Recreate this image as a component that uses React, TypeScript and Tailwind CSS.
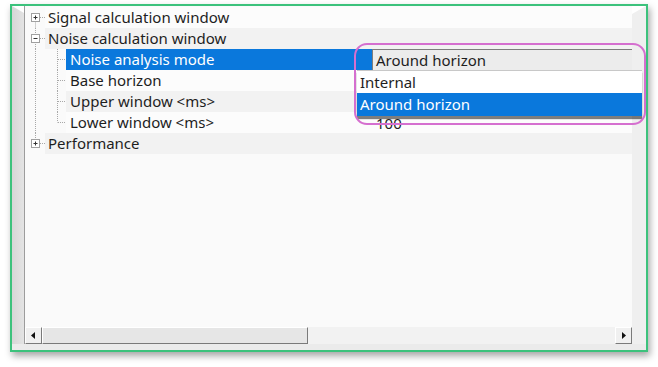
import React from "react";

const FONT = { fontFamily: '"Noto Sans", "Open Sans", Arial, sans-serif' };

type RowDef = {
  label: string;
  level: 0 | 1;
  expander?: "plus" | "minus";
  bg: "white" | "gray" | "sel";
  rootLine: "bottom" | "full" | "top";
  childLine?: "full" | "top";
  value?: React.ReactNode;
};

const DOT = "#a8a8a8";

function Lines({ row }: { row: RowDef }) {
  const w = row.level === 0 ? 20 : 41;
  const v0 =
    row.rootLine === "bottom" ? [10.5, 21] : row.rootLine === "top" ? [0, 10.5] : [0, 21];
  return (
    <svg width={w} height={21} className="shrink-0 block">
      <line x1={10.5} y1={v0[0]} x2={10.5} y2={v0[1]} stroke={DOT} strokeWidth={1} strokeDasharray="1 1" />
      {row.level === 0 && (
        <line x1={15} y1={10.5} x2={20} y2={10.5} stroke={DOT} strokeWidth={1} strokeDasharray="1 1" />
      )}
      {row.level === 1 && row.childLine && (
        <>
          <line
            x1={32.5}
            y1={0}
            x2={32.5}
            y2={row.childLine === "top" ? 10.5 : 21}
            stroke={DOT}
            strokeWidth={1}
            strokeDasharray="1 1"
          />
          <line x1={33} y1={10.5} x2={41} y2={10.5} stroke={DOT} strokeWidth={1} strokeDasharray="1 1" />
        </>
      )}
      {row.expander && (
        <g>
          <rect x={6.5} y={6.5} width={8} height={8} fill="#fff" stroke="#a0a0a0" strokeWidth={1} />
          <line x1={8.5} y1={10.5} x2={12.5} y2={10.5} stroke="#333" strokeWidth={1} />
          {row.expander === "plus" && (
            <line x1={10.5} y1={8.5} x2={10.5} y2={12.5} stroke="#333" strokeWidth={1} />
          )}
        </g>
      )}
    </svg>
  );
}

const rows: RowDef[] = [
  { label: "Signal calculation window", level: 0, expander: "plus", bg: "white", rootLine: "bottom" },
  { label: "Noise calculation window", level: 0, expander: "minus", bg: "gray", rootLine: "full" },
  { label: "Noise analysis mode", level: 1, bg: "sel", rootLine: "full", childLine: "full" },
  { label: "Base horizon", level: 1, bg: "white", rootLine: "full", childLine: "full" },
  { label: "Upper window <ms>", level: 1, bg: "gray", rootLine: "full", childLine: "full" },
  { label: "Lower window <ms>", level: 1, bg: "white", rootLine: "full", childLine: "top", value: "100" },
  { label: "Performance", level: 0, expander: "plus", bg: "gray", rootLine: "top" },
];

function Row({ row }: { row: RowDef }) {
  const cellBg =
    row.bg === "gray" ? "bg-[#f2f2f2]" : row.bg === "sel" ? "bg-[#0a78dc]" : "bg-[#fcfcfc]";
  const nameW = row.level === 0 ? "w-[327px]" : "w-[306px]";
  return (
    <div className="flex h-[21px] items-stretch">
      <Lines row={row} />
      <div className={`flex flex-1 ${row.bg === "gray" ? "bg-[#f2f2f2]" : "bg-[#fcfcfc]"}`}>
        <div
          className={`${nameW} shrink-0 flex items-center ${cellBg} ${
            row.level === 0 ? "pl-[3px]" : "pl-[4px]"
          } ${row.bg === "sel" ? "text-white" : "text-[#1e1e1e]"} text-[15px] whitespace-nowrap`}
        >
          {row.label}
        </div>
        {row.bg === "sel" ? (
          <div className="flex-1 bg-[#ececec] border-t border-l border-[#7d7d7d] flex items-center pl-[3px] text-[15px] text-[#1e1e1e] whitespace-nowrap">
            Around horizon
          </div>
        ) : (
          <div className="flex-1 flex items-center pl-[4px] pt-[2px] text-[15px] text-[#1e1e1e]">{row.value}</div>
        )}
      </div>
    </div>
  );
}

function ArrowButton({ dir }: { dir: "left" | "right" }) {
  return (
    <div className="w-[17px] h-[17px] shrink-0 bg-[#f0f0f0] border-t border-l border-t-white border-l-white border-r border-b border-r-[#7a7a7a] border-b-[#7a7a7a] flex items-center justify-center">
      <svg width="5" height="7" viewBox="0 0 5 7">
        {dir === "left" ? <polygon points="4,0 4,7 0,3.5" fill="#111" /> : <polygon points="1,0 1,7 5,3.5" fill="#111" />}
      </svg>
    </div>
  );
}

export default function App() {
  return (
    <div className="relative w-[658px] h-[367px] bg-white overflow-hidden" style={FONT}>
      <div className="ml-[10px] mt-[4px] w-[638px] h-[348px] border-2 border-[#3cc27c] shadow-[2px_4px_7px_rgba(0,0,0,0.35)] bg-white flex flex-col">
        <div className="flex h-[338px]">
          <div className="w-[12px] shrink-0 bg-[linear-gradient(90deg,#d6d6d6,#e4e4e4)] [clip-path:polygon(0_0,100%_7px,100%_100%,0_100%)]" />
          <div className="w-[608px] shrink-0 border-l border-[#9c9c9c] flex flex-col bg-[#fafafa]">
            <div className="flex-1 pt-[1px]">
              {rows.map((r) => (
                <Row key={r.label} row={r} />
              ))}
            </div>
            <div className="h-[17px] flex bg-[#f2f2f2]">
              <ArrowButton dir="left" />
              <div className="w-[266px] h-[17px] shrink-0 bg-[#e6e6e6] border-t border-l border-t-white border-l-white border-r border-b border-r-[#7a7a7a] border-b-[#7a7a7a]" />
              <div className="flex-1" />
              <ArrowButton dir="right" />
            </div>
          </div>
          <div className="w-[14px] shrink-0 bg-[#efefef] [clip-path:polygon(0_8px,100%_0,100%_100%,0_100%)]" />
        </div>
        <div className="h-[6px] bg-[#ebebeb]" />
      </div>

      {/* dropdown list */}
      <div className="absolute left-[357px] top-[70px] w-[285px] shadow-[0_3px_1px_rgba(0,0,0,0.5)] text-[15px]">
        <div className="h-[23px] bg-white border-t border-[#c8c8c8] flex items-center pl-[3px] text-[#1e1e1e] whitespace-nowrap">
          Internal
        </div>
        <div className="h-[23px] bg-[#0a78dc] flex items-center pl-[3px] text-white whitespace-nowrap">
          Around horizon
        </div>
      </div>

      {/* annotation */}
      <div className="absolute left-[354px] top-[43px] w-[292px] h-[82px] border-2 border-[#d56fcf] rounded-[13px]" />
    </div>
  );
}
